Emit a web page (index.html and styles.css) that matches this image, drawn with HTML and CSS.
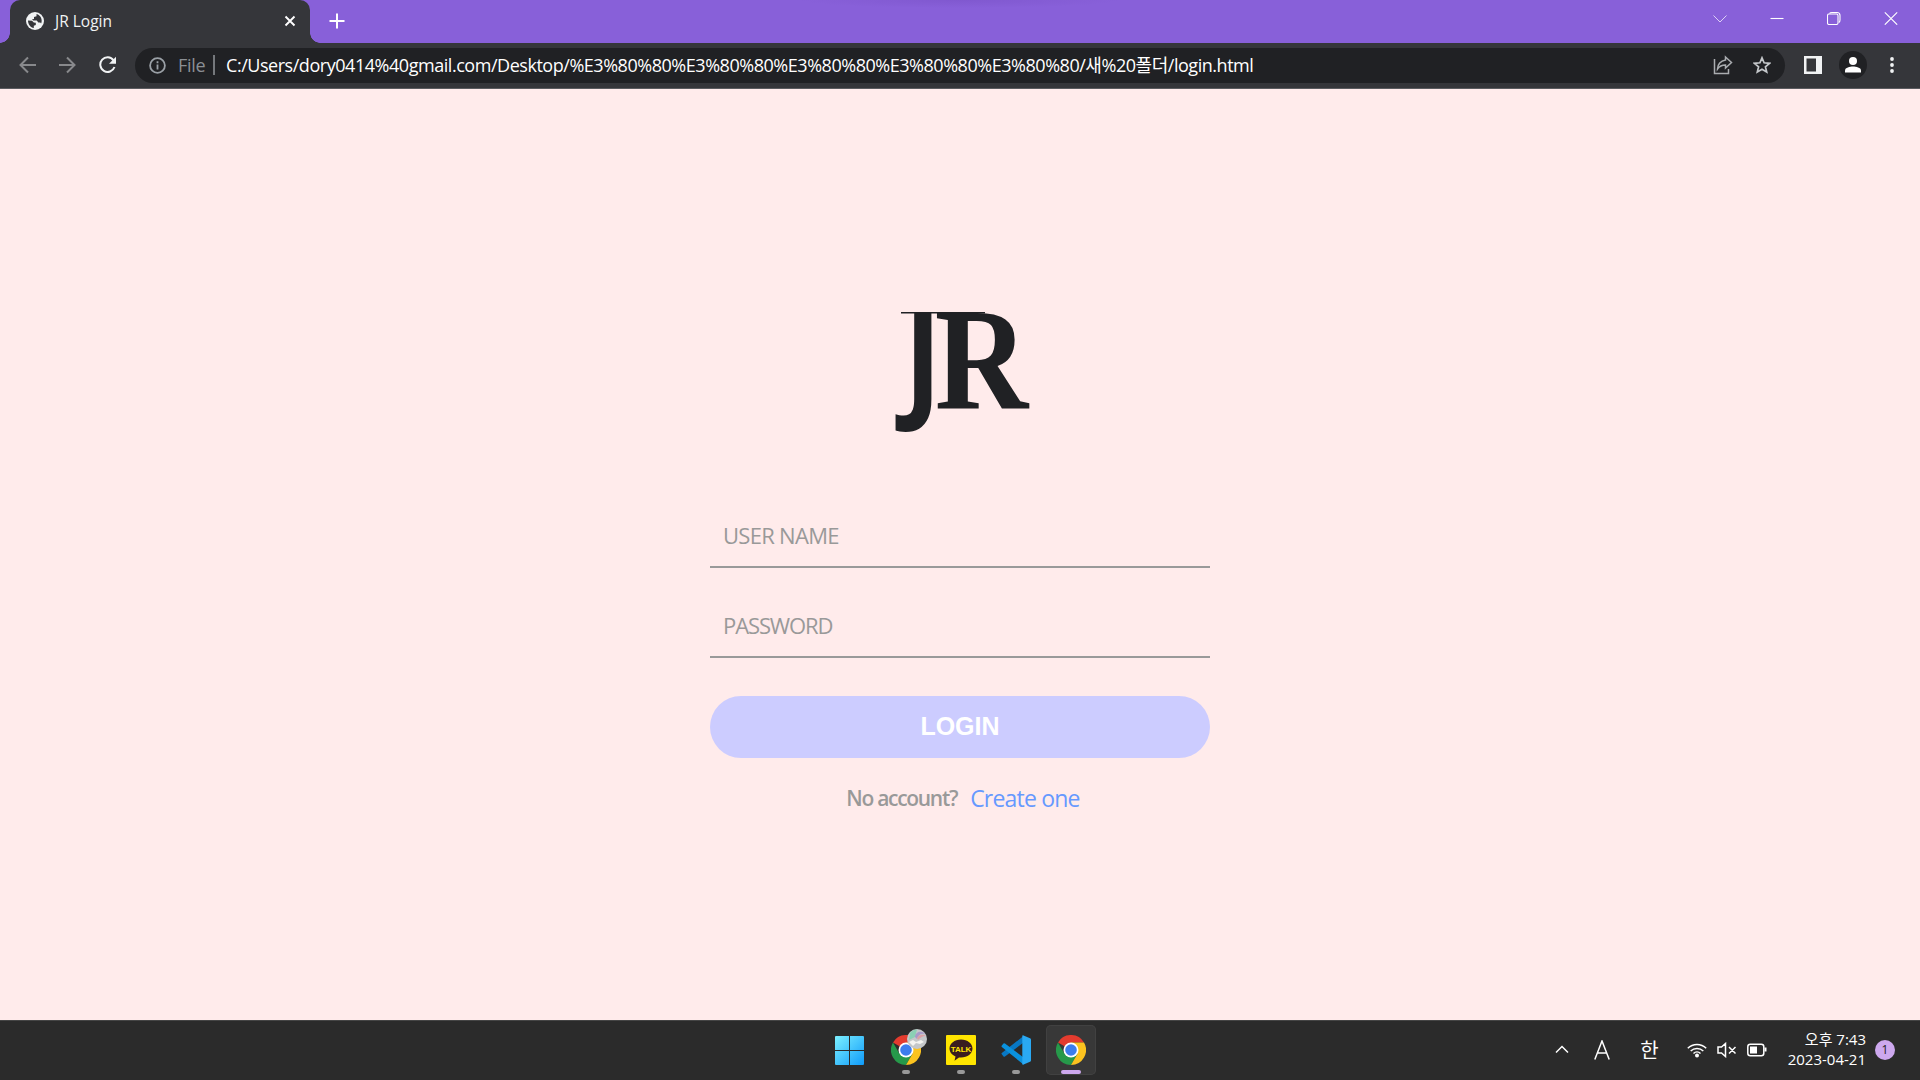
FILE: index.html
```html
<!DOCTYPE html>
<html lang="ko">
<head>
<meta charset="utf-8">
<title>JR Login</title>
<link rel="stylesheet" href="styles.css">
</head>
<body>
<div class="desktop">
  <header class="tabstrip">
    <div class="tab">
      <svg class="globe" width="18" height="18" viewBox="0 0 18 18"><circle cx="9" cy="9" r="9" fill="#f1f3f4"/><path d="M2 8.500l4 .2 1.800 1.800 2 .2v2.200l-2 .8v2.200C4.500 15.500 2 12.500 2 8.500zM10.500 2v2.300L8 5v2l-2 .3 1.200 1.300 3.600-.2 1.500 2h2l.8 1.200C16.800 8 14.800 3 10.500 2z" fill="#35363a"/></svg>
      <span class="tab-title">JR Login</span>
      <svg class="tab-close" width="12" height="12" viewBox="0 0 12 12"><path d="M1.500 1.500l9 9M10.500 1.500l-9 9" stroke="#fff" stroke-width="1.900"/></svg>
    </div>
    <svg class="new-tab" width="16" height="16" viewBox="0 0 16 16"><path d="M8 .5v15M.5 8h15" stroke="#fff" stroke-width="2"/></svg>
    <div class="window-controls">
      <svg class="thin" width="14" height="14" viewBox="0 0 14 14"><path d="M.5 4.500L7 11l6.500-6.500"/></svg>
      <svg width="14" height="14" viewBox="0 0 14 14"><path d="M.5 7.500h13"/></svg>
      <svg width="14" height="14" viewBox="0 0 14 14"><rect x=".5" y="3" width="10.500" height="10.500" rx="1.500"/><path d="M2.500 2.500Q3 1.500 5 1.500h5q3 0 3 3V9q0 2-1.200 2.500"/></svg>
      <svg width="14" height="14" viewBox="0 0 14 14"><path d="M.8 1.300l12.400 12.400M13.200 1.300L.8 13.700"/></svg>
    </div>
  </header>
  <nav class="toolbar">
    <svg class="nav-icon dim" width="18" height="18" viewBox="0 0 18 18"><path d="M17 9H2M9 1.500L1.500 9 9 16.500"/></svg>
    <svg class="nav-icon dim" width="18" height="18" viewBox="0 0 18 18"><path d="M0 9h15M8 1.500L15.500 9 8 16.500"/></svg>
    <svg class="nav-icon" width="18" height="18" viewBox="0 0 18 18"><path d="M14.500 4.300A7.300 7.300 0 1 0 15.500 11"/><path class="solid" d="M17 .8v7h-7z"/></svg>
    <div class="omnibox">
      <svg class="info" width="17" height="17" viewBox="0 0 17 17"><circle cx="8.500" cy="8.500" r="7.400"/><path d="M8.500 7.500v5M8.500 4.300v2"/></svg>
      <span class="scheme">File</span>
      <span class="divider"></span>
      <span class="url">C:/Users/dory0414%40gmail.com/Desktop/%E3%80%80%E3%80%80%E3%80%80%E3%80%80%E3%80%80/새%20폴더/login.html</span>
      <svg class="share" width="20" height="20" viewBox="0 0 20 20"><path d="M1.500 4v14.500h14V14"/><path d="M12.500 2l6 5.500-6 5.500V10C9 10 6.500 11 4.500 14c.3-5 3.500-8.200 8-9z"/></svg>
      <svg class="star" width="18" height="18" viewBox="0 0 18 18"><path d="M9 1.800l2.100 5 5.400.5-4.100 3.500 1.300 5.300L9 13.300l-4.700 2.800 1.300-5.300L1.500 7.300l5.400-.5z"/></svg>
    </div>
    <svg class="panel" width="18" height="18" viewBox="0 0 18 18"><path d="M0 0h18v18H0zM2.500 2.500v13H12v-13z" fill="#f1f3f4" fill-rule="evenodd"/></svg>
    <svg class="avatar" width="28" height="28" viewBox="0 0 28 28"><circle cx="14" cy="14" r="14" fill="#202124"/><circle cx="14" cy="10" r="4" fill="#fff"/><path d="M6 21.500v-2c0-3 5-4 8-4s8 1 8 4v2z" fill="#fff"/></svg>
    <svg class="more" width="4" height="16" viewBox="0 0 4 16"><g fill="#f1f3f4"><circle cx="2" cy="2" r="1.900"/><circle cx="2" cy="8" r="1.900"/><circle cx="2" cy="14" r="1.900"/></g></svg>
  </nav>
  <main class="page">
    <svg class="brand" width="130" height="124" viewBox="0 0 130 124" role="img" aria-label="JR">
      <text class="brand-letters" transform="scale(.88 1)"><tspan class="brand-j" x="4.500" y="94.500">J</tspan><tspan class="brand-r" x="39.500" y="98.500">R</tspan></text>
      <path d="M1 2h84v1.500H1z" fill="#202124"/>
    </svg>
    <form class="login">
      <input class="field" type="text" placeholder="USER NAME">
      <input class="field password" type="password" placeholder="PASSWORD">
      <button class="submit" type="button">LOGIN</button>
      <p class="signup"><span class="question">No account?</span><a class="create" href="#">Create one</a></p>
    </form>
  </main>
  <footer class="taskbar">
    <div class="apps">
      <div class="app start">
        <svg width="29" height="29" viewBox="0 0 29 29"><defs><linearGradient id="win" x1="0" y1="0" x2="1" y2="1"><stop offset="0" stop-color="#7cf0ff"/><stop offset="1" stop-color="#0f9bfa"/></linearGradient></defs><path d="M0 1q0-1 1-1h13v14H0zM15 0h13q1 0 1 1v13H15zM0 15h14v14H1q-1 0-1-1zM15 15h14v13q0 1-1 1H15z" fill="url(#win)"/></svg>
      </div>
      <div class="app running">
        <svg width="30" height="30" viewBox="0 0 30 30"><use href="#chrome"/></svg>
        <svg class="profile" width="20" height="20" viewBox="0 0 20 20"><circle cx="10" cy="10" r="10" fill="#c4c7c9"/><path d="M3 4a9.500 9.500 0 0 1 7-3.500L8 8l-6 3z" fill="#8bd0b4"/><path d="M8 8c0-5 7-7 10-3-4-1-7 1-8 5z" fill="#a89ac9"/><path d="M10 9c2-4 6-4 9-2-4 0-6 2-8 4z" fill="#dca1a5"/><path d="M2 13l4-2 3 2 5-2 3 2-4 2-4-1-3 3z" fill="#f4f4f1"/></svg>
      </div>
      <div class="app running">
        <svg width="30" height="30" viewBox="0 0 30 30"><rect width="30" height="30" rx="1" fill="#ffe500"/><path d="M15 4.500c6.500 0 11.500 4 11.500 9s-5 9-11.500 9h-2l-4.500 3.200 1-4.200C6 20 3.500 17 3.500 13.500c0-5 5-9 11.500-9z" fill="#3a1d1f"/><text class="talk" x="15" y="16.500" text-anchor="middle">TALK</text></svg>
      </div>
      <div class="app running">
        <svg width="30" height="30" viewBox="0 0 30 30"><path d="M.8 19.300L2.500 21.500q.8.500 1.500 0L22.500 7.500V1L.8 18q-.6.600 0 1.300z" fill="#0878c5"/><path d="M.8 10.500L2.500 8.500q.8-.6 1.500 0L22.500 22.500V29.500L.8 12q-.7-.7 0-1.500z" fill="#0a91dd"/><path d="M22 .3L29 3.300q1 .4 1 1.500v20.400q0 1.100-1 1.500L22 29.800q-.7.200-.7-1.300V1.500q0-1.500.7-1.200z" fill="#2aa9f3"/></svg>
      </div>
      <div class="app running active">
        <svg width="30" height="30" viewBox="0 0 30 30"><g id="chrome"><path d="M15 15L2 7.500A15 15 0 0 1 28 7.500H15z" fill="#e33b2e"/><path d="M2 7.500A15 15 0 0 0 15 30L21.500 18.700 8.500 18.700z" fill="#26994a"/><path d="M15 7.500h13A15 15 0 0 1 15 30l6.500-11.300z" fill="#fcc31f"/><circle cx="15" cy="15" r="7.500" fill="#fff"/><circle cx="15" cy="15" r="5.800" fill="#3c7ded"/></g></svg>
      </div>
    </div>
    <div class="tray">
      <svg class="chevron" width="14" height="9" viewBox="0 0 14 9"><path d="M1 7.500l6-6 6 6"/></svg>
      <svg class="ime-mode" width="16" height="20" viewBox="0 0 16 20"><path d="M.8 19.500L8 1l7.200 18.500M3 13h10"/></svg>
      <span class="ime">한</span>
      <svg class="wifi" width="20" height="16" viewBox="0 0 20 16"><path d="M.8 6.200a13 13 0 0 1 18.400 0M3.700 9a9 9 0 0 1 12.600 0M6.500 11.500a5 5 0 0 1 7 0"/><circle cx="10" cy="13.500" r="2" fill="#fff" stroke="none"/></svg>
      <svg class="sound" width="20" height="16" viewBox="0 0 20 16"><path d="M1 5h3.500L8.500 1.500v13L4.500 11H1zM12 5l6.500 6.500M18.500 5L12 11.500"/></svg>
      <svg class="battery" width="20" height="14" viewBox="0 0 20 14"><rect x=".8" y="1.300" width="16" height="11.400" rx="2.500"/><path d="M18.500 4.500v4" stroke-width="2"/><rect x="3" y="3.500" width="7" height="7" fill="#fff" stroke="none"/></svg>
      <div class="clock"><span class="time">오후 7:43</span><span class="date">2023-04-21</span></div>
      <span class="badge">1</span>
    </div>
  </footer>
</div>
</body>
</html>
```
FILE: styles.css
```css
* { box-sizing: border-box; }
body { margin: 0; font-family: "Open Sans", "Noto Sans CJK KR", sans-serif; }
svg { display: block; flex: none; }
.desktop { width: 1920px; height: 1080px; display: flex; flex-direction: column; overflow: hidden; background: #ffebeb; }

.tabstrip { height: 43px; flex: none; display: flex; background: radial-gradient(ellipse 160px 8px at 960px 0, #8058cf, #8860d9) #8860d9; padding-left: 10px; }
.tab { position: relative; width: 300px; height: 43px; display: flex; align-items: center; padding: 0 14px 1px 16px; background: #35363a; border-radius: 10px 10px 0 0; }
.tab::before, .tab::after { content: ""; position: absolute; bottom: 0; width: 10px; height: 10px; }
.tab::before { left: -10px; background: radial-gradient(circle at 0 0, transparent 9.500px, #35363a 10px); }
.tab::after { right: -10px; background: radial-gradient(circle at 100% 0, transparent 9.500px, #35363a 10px); }
.tab-title { margin-left: 11px; padding-bottom: 1px; flex: 1; color: #f1f3f4; font-size: 15.500px; }
.new-tab { margin: 13px 0 0 19px; }
.window-controls { margin: 11px 22px 0 auto; display: flex; gap: 43px; }
.window-controls svg { fill: none; stroke: #fff; stroke-width: 1.100; }
.window-controls .thin { stroke: #ddd0f5; stroke-width: 1; }

.toolbar { height: 46px; flex: none; display: flex; align-items: center; padding: 0 26px 2px 19px; background: #35363a; border-bottom: 1px solid #5b5c60; }
.nav-icon { margin-right: 22px; fill: none; stroke: #f1f3f4; stroke-width: 2; }
.nav-icon .solid { fill: #f1f3f4; stroke: none; }
.dim { stroke: #88898c; }
.omnibox { flex: 1; height: 35px; margin: 1px 19px 0 -4px; display: flex; align-items: center; padding: 0 14px 0 14px; border-radius: 18px; background: #202124; color: #fff; font-size: 18px; white-space: nowrap; }
.info { fill: none; stroke: #9aa0a6; stroke-width: 1.800; }
.scheme { margin-left: 12px; padding-bottom: 1px; color: #8b8f94; width: 27px; letter-spacing: -.3px; }
.divider { width: 2px; height: 20px; margin: 0 11px 0 8px; background: #75787c; }
.url { flex: 1; padding-bottom: 3px; letter-spacing: -.46px; }
.share { fill: none; stroke: #aaadb0; stroke-width: 1.500; margin-right: 20px; }
.star { fill: none; stroke: #c4c7ca; stroke-width: 1.700; }
.avatar { margin: 0 23px 0 17px; }

.page { flex: 1; display: flex; flex-direction: column; align-items: center; background: #ffebeb; padding-top: 221px; }
.brand { margin-left: 10px; overflow: visible; }
.brand-letters { fill: #202124; }
.brand-j { font: 700 129px "Open Sans", sans-serif; }
.brand-r { font: bold 147px "Liberation Serif", serif; }
.login { width: 500px; margin-top: 68px; display: flex; flex-direction: column; }
.field { height: 66px; margin-bottom: 24px; padding: 2px 13px 0; border: 0; border-bottom: 2px solid #999; background: transparent; font: 22px "Open Sans", sans-serif; letter-spacing: -.7px; outline: 0; }
.password { letter-spacing: -1.100px; }
.field::placeholder { color: #999; opacity: 1; }
.submit { height: 62px; margin-top: 14px; padding: 0 0 2px; border: 0; border-radius: 31px; background: #ccf; color: #fff; font: bold 25px "Liberation Sans", sans-serif; }
.signup { margin: 24px 0 0 6px; display: flex; justify-content: center; align-items: baseline; gap: 13px; }
.question { position: relative; top: -1px; color: #999; font-size: 21px; font-weight: 600; letter-spacing: -1.300px; }
.create { color: #69f; font-size: 23px; letter-spacing: -.8px; text-decoration: none; }

.taskbar { height: 60px; flex: none; display: grid; grid-template-columns: 1fr auto 1fr; background: #2b2b2b; border-top: 1px solid #454545; color: #fff; }
.apps { grid-column: 2; display: flex; gap: 5px; padding: 4px 0 0 2px; }
.app { position: relative; width: 50px; height: 50px; display: flex; justify-content: center; padding-top: 10px; border-radius: 5px; }
.start { padding: 11px 4px 0 0; }
.active { background: #383838; box-shadow: inset 0 0 0 1px #414141; }
.running::after { content: ""; position: absolute; bottom: 1px; width: 8px; height: 4px; border-radius: 2px; background: #999; }
.active::after { width: 20px; background: #cda8ee; }
.profile { position: absolute; left: 26px; top: 4px; }
.talk { font: bold 8px "Liberation Sans", sans-serif; fill: #ffe500; }
.tray { display: flex; align-items: center; justify-content: flex-end; padding: 0 25px 2px 0; }
.tray svg { fill: none; stroke: #fff; stroke-width: 1.500; }
.chevron { margin-right: 25px; }
.ime-mode { margin-right: 30px; }
.ime { font: 20px "Noto Sans CJK KR", sans-serif; margin-right: 28px; }
.wifi { margin-right: 10px; }
.sound { margin-right: 10px; }
.battery { margin-right: 21px; }
.clock { display: flex; flex-direction: column; align-items: flex-end; padding-bottom: 2px; font-size: 15px; line-height: 20px; letter-spacing: 0; }
.badge { width: 20px; height: 20px; margin: 1px 0 0 9px; border-radius: 50%; background: #cda8ee; color: #222; font-size: 12px; line-height: 20px; text-align: center; }
```
